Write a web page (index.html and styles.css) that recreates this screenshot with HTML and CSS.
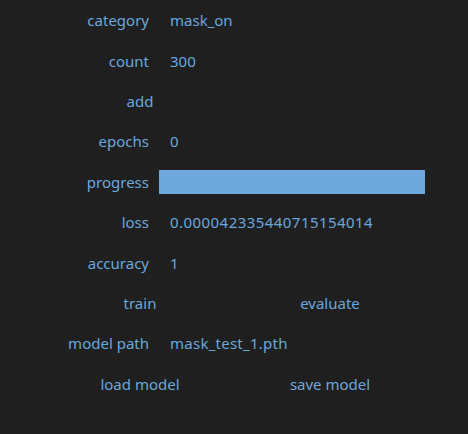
FILE: index.html
```html
<!DOCTYPE html>
<html>
<head>
<meta charset="utf-8">
<link rel="stylesheet" href="styles.css">
</head>
<body>
<div class="panel">
  <div class="row"><span class="label">category</span><span class="value">mask_on</span></div>
  <div class="row"><span class="label">count</span><span class="value">300</span></div>
  <div class="row buttons"><span class="btn">add</span><span class="btn"></span></div>
  <div class="row"><span class="label">epochs</span><span class="value">0</span></div>
  <div class="row"><span class="label">progress</span><span class="bar"><span class="fill" style="width:100%"></span></span></div>
  <div class="row"><span class="label">loss</span><span class="value long-num">0.000042335440715154014</span></div>
  <div class="row"><span class="label">accuracy</span><span class="value">1</span></div>
  <div class="row buttons"><span class="btn">train</span><span class="btn">evaluate</span></div>
  <div class="row"><span class="label">model path</span><span class="value path">mask_test_1.pth</span></div>
  <div class="row buttons"><span class="btn">load model</span><span class="btn">save model</span></div>
</div>
</body>
</html>
```
FILE: styles.css
```css
html, body {
  margin: 0;
  padding: 0;
  background: #1f1f1f;
}
body {
  font-family: "Noto Sans", "DejaVu Sans", sans-serif;
  font-size: 15px;
  color: #6aa8dc;
}
.panel {
  margin-left: 45px;
  width: 380px;
  display: flex;
  flex-direction: column;
}
.row {
  height: 40.4px;
  display: grid;
  grid-template-columns: 104px 1fr;
  column-gap: 10px;
  align-items: center;
}
.label {
  text-align: right;
}
.value {
  padding-left: 11px;
}
.long-num {
  letter-spacing: 0.45px;
}
.path {
  letter-spacing: 0.25px;
}
.bar {
  height: 24px;
  display: flex;
}
.fill {
  background: #6fa8dc;
  height: 100%;
}
.row.buttons {
  grid-template-columns: 1fr 1fr;
  column-gap: 0;
}
.btn {
  text-align: center;
}
```
